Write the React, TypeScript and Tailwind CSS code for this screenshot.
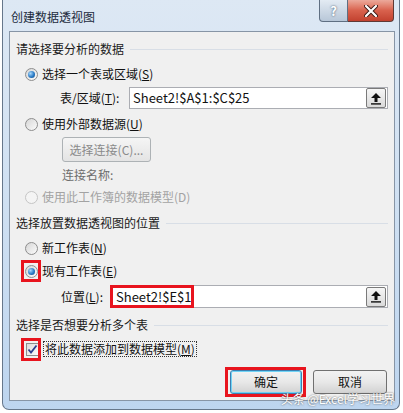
import React from "react";

const RED = "border-[3px] border-[#e8141e]";

function Radio({ checked, disabled }: { checked?: boolean; disabled?: boolean }) {
  return (
    <span
      className={`relative inline-flex h-[13px] w-[13px] shrink-0 items-center justify-center rounded-full border ${
        disabled
          ? "border-[#c5c5c5] bg-[#f4f4f4]"
          : "border-[#8d8d8d] bg-gradient-to-br from-[#d6d6d6] to-[#fbfbfb]"
      }`}
    >
      {checked && (
        <span className="h-[7px] w-[7px] rounded-full bg-[radial-gradient(circle_at_35%_35%,#a9d8fa,#2a7bc6_55%,#13467e)]" />
      )}
    </span>
  );
}

function Header({ text }: { text: string }) {
  return (
    <div className="flex h-[18px] items-center pl-[6px] pr-[6px]">
      <span className="text-[12px] text-[#1a1a1a]">{text}</span>
      <span className="ml-[6px] h-px flex-1 bg-[#d8dee6]" />
    </div>
  );
}

function UpButton() {
  return (
    <span className="mr-px flex h-[20px] w-[20px] items-center justify-center rounded-[2px] border border-[#7a7a7a] bg-gradient-to-b from-[#f6f6f6] to-[#dadada]">
      <svg width="12" height="13" viewBox="0 0 12 13">
        <path d="M6 1 L11 6 L7.5 6 L7.5 10 L4.5 10 L4.5 6 L1 6 Z" fill="#111" />
        <rect x="1" y="11.2" width="10" height="1.4" fill="#111" />
      </svg>
    </span>
  );
}

export default function App() {
  return (
    <div className="relative h-[413px] w-[403px] overflow-hidden bg-white font-['Noto_Sans_CJK_SC',sans-serif] leading-[18px] text-[#111]">
      <div className="ml-[2px] flex h-[410px] w-[398px] flex-col rounded-b-[7px] border border-t-0 border-[#66778b] bg-gradient-to-b from-[#dde8f4] via-[#cfe0f2] to-[#bdd5ef]">
        {/* title bar */}
        <div className="flex h-[31px] shrink-0 items-start justify-between">
          <span className="pl-[8px] pt-[8px] text-[12px] text-[#1c2b3d]">创建数据透视图</span>
          <div className="mr-[5px] flex">
            <span className="flex h-[22px] w-[29px] items-center justify-center rounded-bl-[4px] border border-t-0 border-[#5f6f82] bg-gradient-to-b from-[#e3ebf3] to-[#b8c7d8] text-[13px] font-bold text-white [text-shadow:0_0_2px_#33465c]">
              ?
            </span>
            <span className="flex h-[22px] w-[46px] items-center justify-center rounded-br-[4px] border border-l-0 border-t-0 border-[#5f3a36] bg-gradient-to-b from-[#eba99b] via-[#d8614d] to-[#c2412f]">
              <svg width="14" height="12" viewBox="0 0 14 12">
                <path d="M2 1 L12 11 M12 1 L2 11" stroke="#3b1a16" strokeWidth="4" strokeLinecap="round" />
                <path d="M2 1 L12 11 M12 1 L2 11" stroke="#fff" strokeWidth="2.2" strokeLinecap="round" />
              </svg>
            </span>
          </div>
        </div>

        {/* content panel */}
        <div className="ml-[6px] mr-[4px] flex flex-1 flex-col border border-[#8795a6] bg-[#f0f0f0] pt-[8px] text-[12px]">
          <Header text="请选择要分析的数据" />

          <div className="ml-[15px] mt-[7px] flex h-[18px] items-center gap-[4px]">
            <Radio checked />
            <span>
              选择一个表或区域(<u>S</u>)
            </span>
          </div>

          <div className="mt-[4px] flex h-[22px] items-center pr-[6px]">
            <span className="w-[119px] pl-[50px]">
              表/区域(<u>T</u>):
            </span>
            <div className="flex h-[22px] flex-1 items-center justify-between border border-[#abadb3] bg-white pl-[3px]">
              <span className="text-[13px]">Sheet2!$A$1:$C$25</span>
              <UpButton />
            </div>
          </div>

          <div className="ml-[15px] mt-[6px] flex h-[18px] items-center gap-[4px]">
            <Radio />
            <span>
              使用外部数据源(<u>U</u>)
            </span>
          </div>

          <div className="ml-[52px] mt-[4px] flex h-[25px] w-[89px] items-center justify-center rounded-[3px] border border-[#adb2b5] bg-gradient-to-b from-[#f5f5f5] to-[#e4e4e4] text-[#8a8a8a]">
            选择连接(C)...
          </div>

          <div className="ml-[52px] mt-[4px] flex h-[18px] items-center text-[#6d6d6d]">连接名称:</div>

          <div className="ml-[15px] mt-[4px] flex h-[18px] items-center gap-[4px] text-[#a3a3a3]">
            <Radio disabled />
            <span>使用此工作簿的数据模型(D)</span>
          </div>

          <div className="mt-[8px]">
            <Header text="选择放置数据透视图的位置" />
          </div>

          <div className="ml-[15px] mt-[7px] flex h-[18px] items-center gap-[4px]">
            <Radio />
            <span>
              新工作表(<u>N</u>)
            </span>
          </div>

          <div className="ml-[15px] mt-[5px] flex h-[18px] items-center gap-[4px]">
            <span className="relative flex">
              <Radio checked />
              <span className={`absolute left-[-4px] top-[-5px] h-[22px] w-[20px] ${RED}`} />
            </span>
            <span>
              现有工作表(<u>E</u>)
            </span>
          </div>

          <div className="mt-[5px] flex h-[23px] items-center pr-[6px]">
            <span className="w-[100px] pl-[51px]">
              位置(<u>L</u>):
            </span>
            <div className="relative flex h-[23px] flex-1 items-center justify-between border border-[#abadb3] bg-white pl-[5px]">
              <span className="text-[13px]">Sheet2!$E$1</span>
              <UpButton />
              <span className={`absolute left-[-1px] top-[-1px] h-[23px] w-[84px] ${RED}`} />
            </div>
          </div>

          <div className="mt-[8px]">
            <Header text="选择是否想要分析多个表" />
          </div>

          <div className="ml-[16px] mt-[6px] flex h-[18px] items-center gap-[4px]">
            <span className="relative flex">
              <span className="flex h-[13px] w-[13px] items-center justify-center border border-[#8d8d8d] bg-gradient-to-br from-[#dcdcdc] to-[#fbfbfb]">
                <svg width="11" height="11" viewBox="0 0 11 11">
                  <path d="M1.5 5.5 L4 8.5 L9.5 1.5" stroke="#2c3f8f" strokeWidth="1.8" fill="none" />
                </svg>
              </span>
              <span className={`absolute left-[-5px] top-[-5px] h-[23px] w-[20px] ${RED}`} />
            </span>
            <span className="border border-dotted border-[#333] px-px leading-[14px]">
              将此数据添加到数据模型(<u>M</u>)
            </span>
          </div>

          <div className="mt-[12px] flex justify-end gap-[11px] pr-[7px]">
            <span className="relative flex">
              <span className="flex h-[24px] w-[72px] items-center justify-center rounded-[3px] border border-[#3c7fb1] bg-gradient-to-b from-[#f2f2f2] via-[#e8e8e8] to-[#d2d2d2] shadow-[inset_0_0_0_1px_#6fd3f6]">
                确定
              </span>
              <span className={`absolute -left-[5px] -right-[4px] -top-[3px] -bottom-[3px] ${RED}`} />
            </span>
            <span className="flex h-[24px] w-[74px] items-center justify-center rounded-[3px] border border-[#707070] bg-gradient-to-b from-[#f2f2f2] via-[#e8e8e8] to-[#d2d2d2]">
              取消
            </span>
          </div>
        </div>
        <div className="h-[8px] shrink-0" />
      </div>

      <span className="absolute bottom-[7px] right-[8px] text-[12px] leading-[14px] text-white [text-shadow:0_0_2px_#444]">
        头条 @Excel学习世界
      </span>
    </div>
  );
}
